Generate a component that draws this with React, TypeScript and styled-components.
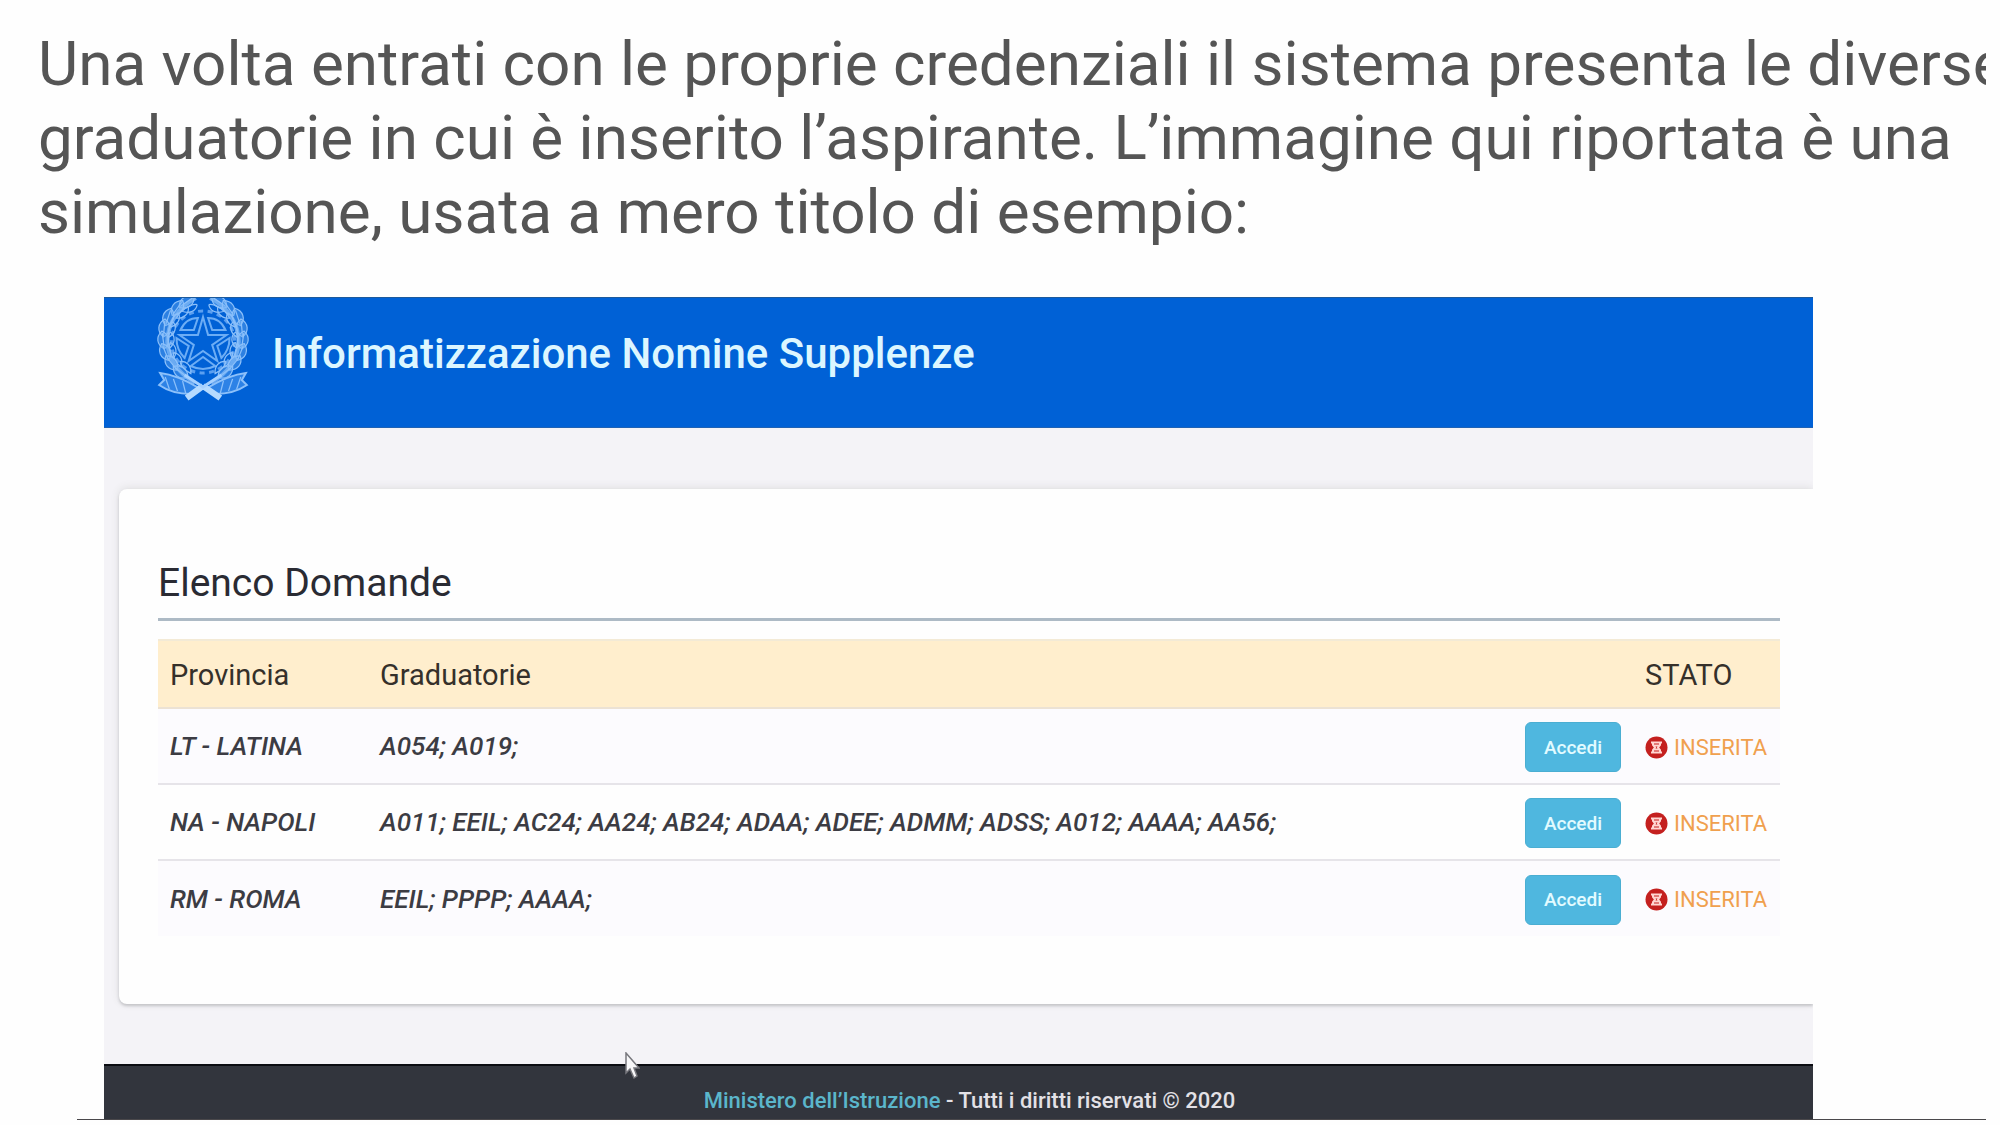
import React from "react";
import styled, { createGlobalStyle } from "styled-components";

const GlobalStyle = createGlobalStyle`
  *, *::before, *::after { box-sizing: border-box; }
  body { margin: 0; background: #fefefe; font-family: Roboto, "Liberation Sans", sans-serif; }
`;

const Page = styled.main`
  margin-right: 14px;
  padding-top: 27px;
  overflow: hidden;
`;

const Intro = styled.p`
  margin: 0 0 48px 38px;
  color: #555555;
  font-size: 62px;
  line-height: 74px;
  white-space: nowrap;
`;

const Line = styled.span`
  display: block;
`;

const Figure = styled.section`
  position: relative;
  margin: 0 173px 0 104px;
  overflow: hidden;
  background: #f4f3f7;
`;

const Header = styled.header`
  display: flex;
  align-items: flex-start;
  gap: 20px;
  height: 131px;
  padding-left: 50px;
  background: #0061d6;
  border-top: 1px solid #1c5a9c;
  border-bottom: 1px solid #1f62b4;
`;

const Title = styled.h1`
  margin: 0;
  padding-top: 28px;
  color: #dcf6ff;
  font-size: 42px;
  font-weight: 500;
  line-height: 56px;
`;

const Card = styled.div`
  margin: 61px 0 60px 15px;
  padding: 66px 33px 68px 39px;
  background: #fefefe;
  border-radius: 8px 0 0 8px;
  box-shadow: 0 2px 3px #c4c4c8, 0 -1px 8px #dededf;
`;

const Heading = styled.h2`
  margin: 0 0 18px;
  padding-bottom: 7px;
  border-bottom: 3px solid #adbac5;
  color: #2a2b33;
  font-size: 39px;
  font-weight: 400;
  line-height: 56px;
`;

const Table = styled.table`
  width: 100%;
  border-collapse: collapse;
  table-layout: fixed;
`;

const Col = styled.col<{ $width?: number }>`
  width: ${(p) => (p.$width ? `${p.$width}px` : "auto")};
`;

const HeadCell = styled.th`
  height: 68px;
  padding: 2px 0 0 12px;
  background: #ffeecd;
  border-top: 2px solid #f3ead6;
  border-bottom: 2px solid #ece2d4;
  color: #35302a;
  font-size: 29px;
  font-weight: 400;
  text-align: left;
`;

const Row = styled.tr`
  height: 76px;
  &:nth-child(odd) { background: #fcfbfe; }
  & + & { border-top: 2px solid #e6e4e9; }
`;

const Cell = styled.td`
  padding: 0 0 0 12px;
  color: #3c3c43;
  font-size: 26px;
  font-style: italic;
  font-weight: 500;
  white-space: nowrap;
`;

const ActionCell = styled.td`
  padding: 2px 0 0;
`;

const Button = styled.button`
  display: block;
  width: 96px;
  height: 50px;
  padding: 0;
  border: 1px solid #4aaed2;
  border-radius: 6px;
  background: #4fb7df;
  color: #e2fbff;
  font: 500 19px Roboto, "Liberation Sans", sans-serif;
`;

const Status = styled.span`
  display: flex;
  align-items: center;
  gap: 6px;
  padding-left: 12px;
  color: #f0a04e;
  font-size: 22px;
`;

const Footer = styled.footer`
  height: 56px;
  padding: 17px 0 0 22px;
  background: #32353d;
  border-top: 2px solid #0b0c12;
  color: #e3e1e6;
  font-size: 22px;
  font-weight: 500;
  line-height: 36px;
  text-align: center;
`;

const FooterLink = styled.a`
  color: #5bb6cb;
  text-decoration: none;
`;

const Pointer = styled.svg`
  position: absolute;
  left: 521px;
  bottom: 40px;
`;

const Rule = styled.hr`
  position: relative;
  height: 1px;
  margin: -1px 0 0 77px;
  border: 0;
  background: #4a484b;
`;

type LeafSpot = { x: number; y: number; angle: number };

const leaves: LeafSpot[] = [
  { x: 31, y: 4, angle: 55 },
  { x: 22, y: 10, angle: 35 },
  { x: 13, y: 19, angle: 18 },
  { x: 9, y: 30, angle: 5 },
  { x: 8, y: 42, angle: -8 },
  { x: 10, y: 54, angle: -22 },
  { x: 16, y: 65, angle: -38 },
  { x: 25, y: 74, angle: -52 },
];

const Branch = () => (
  <g>
    <path d="M40 0C24 8 12 25 12 44C13 61 23 75 39 85" strokeWidth="4" opacity=".75" />
    {leaves.map((l) => (
      <g key={l.y} transform={`translate(${l.x} ${l.y}) rotate(${l.angle})`}>
        <path d="M0-9C7-4 7 4 0 9C-7 4-7-4 0-9Z" fill="#6fb0f6" fillOpacity=".4" />
        <path d="M0-7V8M8-7C13-2 11 5 5 9C4 3 4-3 8-7" />
      </g>
    ))}
  </g>
);

const Emblem = () => (
  <svg width="98" height="104" viewBox="-1 0 96 104" preserveAspectRatio="none" fill="none" stroke="#8cc0fa" strokeWidth="1.2" aria-hidden="true">
    <circle cx="47" cy="44" r="31" stroke="#5b9ff0" strokeWidth="3" strokeDasharray="5 4.4" />
    <path
      d="M47 19L52 37H70L56 47L61 63L47 53L33 63L38 47L24 37H42Z"
      fill="#0061d6"
      stroke="#6cadf5"
      strokeWidth="2"
    />
    <path
      d="M42 20C34 20 28 25 25 32H38ZM52 20C60 20 66 25 69 32H56ZM21 40C21 48 24 55 29 60L33 48ZM73 40C73 48 70 55 65 60L61 48ZM47 59L35 68C43 72 51 72 59 68Z"
      stroke="#6cadf5"
      strokeWidth="2"
    />
    <Branch />
    <g transform="translate(94 0) scale(-1 1)">
      <Branch />
    </g>
    <path
      d="M5 75C14 76 25 79 43 90L35 96C25 96 14 94 4 87L9 82ZM89 75C80 76 69 79 51 90L59 96C69 96 80 94 90 87L85 82Z"
      fill="#2d82e6"
      strokeWidth="2"
    />
    <path d="M10 79L14 91M18 81L22 93M27 83L30 95M84 79L80 91M76 81L72 93M67 83L64 95" />
    <path d="M47 88L31 100M47 88L64 100" stroke="#b5daff" strokeWidth="6" />
    <path d="M29 77L47 89L65 77" stroke="#a5d0ff" strokeWidth="3" />
  </svg>
);

const Hourglass = () => (
  <svg width="23" height="23" viewBox="0 0 23 23" fill="none" aria-hidden="true">
    <circle cx="11.5" cy="11.5" r="11" fill="#c4201f" />
    <path d="M6 6.5H17M6 16.5H17" stroke="#ffd6d2" strokeWidth="2" />
    <path d="M8 6V9L10 11.5L8 14V17M15 6V9L13 11.5L15 14V17M9 9.5H14M9 13.5H14" stroke="#ffd6d2" strokeWidth="2" />
  </svg>
);

const applications = [
  { province: "LT - LATINA", rankings: "A054; A019;" },
  {
    province: "NA - NAPOLI",
    rankings: "A011; EEIL; AC24; AA24; AB24; ADAA; ADEE; ADMM; ADSS; A012; AAAA; AA56;",
  },
  { province: "RM - ROMA", rankings: "EEIL; PPPP; AAAA;" },
];

export default function App() {
  return (
    <>
      <GlobalStyle />
      <Page>
        <Intro>
          <Line>Una volta entrati con le proprie credenziali il sistema presenta le diverse</Line>
          <Line>graduatorie in cui è inserito l’aspirante. L’immagine qui riportata è una</Line>
          <Line>simulazione, usata a mero titolo di esempio:</Line>
        </Intro>
        <Figure>
          <Header>
            <Emblem />
            <Title>Informatizzazione Nomine Supplenze</Title>
          </Header>
          <Card>
            <Heading>Elenco Domande</Heading>
            <Table>
              <colgroup>
                <Col $width={210} />
                <Col />
                <Col $width={108} />
                <Col $width={147} />
              </colgroup>
              <thead>
                <tr>
                  <HeadCell>Provincia</HeadCell>
                  <HeadCell>Graduatorie</HeadCell>
                  <HeadCell aria-label="Azioni" />
                  <HeadCell>STATO</HeadCell>
                </tr>
              </thead>
              <tbody>
                {applications.map((a) => (
                  <Row key={a.province}>
                    <Cell>{a.province}</Cell>
                    <Cell>{a.rankings}</Cell>
                    <ActionCell>
                      <Button type="button">Accedi</Button>
                    </ActionCell>
                    <ActionCell>
                      <Status>
                        <Hourglass />
                        INSERITA
                      </Status>
                    </ActionCell>
                  </Row>
                ))}
              </tbody>
            </Table>
          </Card>
          <Footer>
            <FooterLink href="#ministero">Ministero dell’Istruzione</FooterLink> - Tutti i diritti riservati © 2020
          </Footer>
          <Pointer width="15" height="28" viewBox="0 0 15 28" aria-hidden="true">
            <path
              d="M1 1V21L5 17L9 26L12 24L9 16H14Z"
              fill="#f7f7f9"
              stroke="#77777d"
              strokeWidth="1.5"
            />
          </Pointer>
        </Figure>
        <Rule />
      </Page>
    </>
  );
}
